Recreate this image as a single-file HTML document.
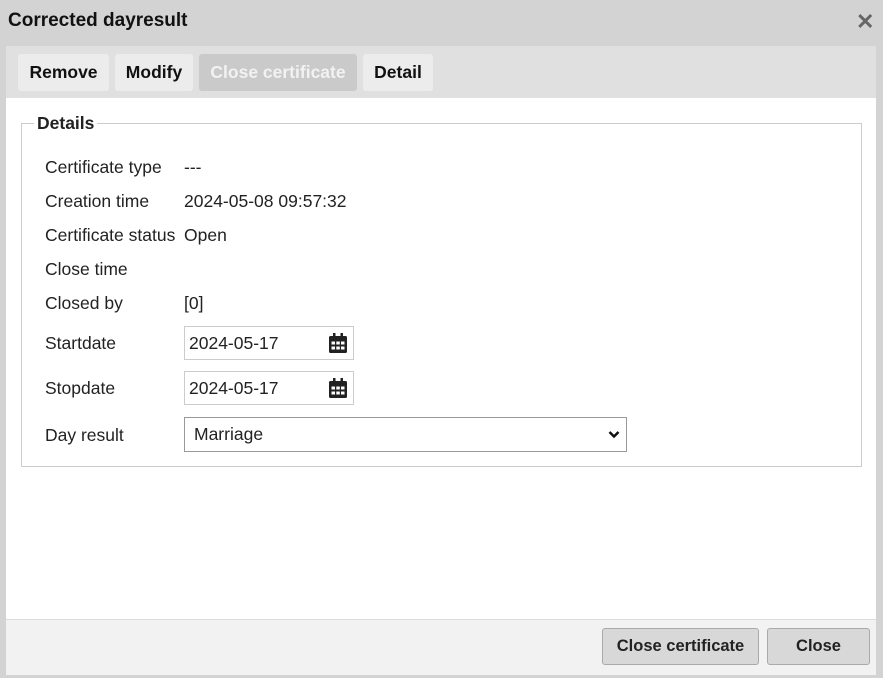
<!DOCTYPE html>
<html><head><style>
body{margin:0;width:883px;height:678px;background:#d3d3d3;font-family:"Liberation Sans",Arial,sans-serif;position:relative;overflow:hidden;color:#222}
.a{position:absolute}
.title{left:8px;top:10px;font-size:19px;font-weight:bold;color:#111}
.x{left:856px;top:9px;font-size:22px;font-weight:bold;color:#666}
.panel{left:6px;top:46px;width:870px;height:628px;background:#fff}
.tb{left:6px;top:46px;width:870px;height:52px;background:#e0e0e0}
.btn{position:absolute;top:54px;height:37px;line-height:37px;background:#ececec;border-radius:3px;font-size:17.5px;font-weight:bold;color:#111;text-align:center}
.fs{left:21px;top:123px;width:839px;height:342px;border:1px solid #ccc}
.leg{left:34px;top:113px;background:#fff;padding:0 3px;font-size:17.5px;font-weight:bold;color:#222}
.l{position:absolute;left:45px;font-size:17.5px;color:#222}
.v{position:absolute;left:184px;font-size:17.5px;color:#222}
.inp{position:absolute;left:184px;width:168px;height:32px;border:1px solid #ccc;font-size:17.5px;line-height:32px;box-sizing:content-box}
.inp span{position:absolute;left:4px}
.foot{left:6px;top:619px;width:870px;height:55px;background:#f2f2f2;border-top:1px solid #ddd}
.fb{position:absolute;top:628px;height:35px;line-height:35px;background:#d8d8d8;border:1px solid #aaa;border-radius:3px;font-size:16.5px;font-weight:bold;color:#222;text-align:center}
</style></head><body>
<div class="a title">Corrected dayresult</div>
<div class="a x">✕</div>
<div class="a panel"></div>
<div class="a tb"></div>
<div class="btn" style="left:18px;width:91px">Remove</div>
<div class="btn" style="left:115px;width:78px">Modify</div>
<div class="btn" style="left:199px;width:158px;background:#cacaca;color:#f2f2f2">Close certificate</div>
<div class="btn" style="left:363px;width:70px">Detail</div>
<div class="a fs"></div>
<div class="a leg">Details</div>
<div class="l" style="top:157px">Certificate type</div><div class="v" style="top:157px">---</div>
<div class="l" style="top:191px">Creation time</div><div class="v" style="top:191px">2024-05-08 09:57:32</div>
<div class="l" style="top:225px">Certificate status</div><div class="v" style="top:225px">Open</div>
<div class="l" style="top:259px">Close time</div>
<div class="l" style="top:293px">Closed by</div><div class="v" style="top:293px">[0]</div>
<div class="l" style="top:333px">Startdate</div>
<div class="inp" style="top:326px"><span>2024-05-17</span>
<svg style="position:absolute;left:144px;top:6px" width="18" height="20" viewBox="0 0 18 20"><rect x="4" y="0" width="2.5" height="4" fill="#222"/><rect x="11.5" y="0" width="2.5" height="4" fill="#222"/><rect x="0" y="3" width="18" height="17" rx="1.5" fill="#222"/><g fill="#fff"><rect x="2.5" y="8.5" width="3.5" height="3"/><rect x="7.3" y="8.5" width="3.5" height="3"/><rect x="12" y="8.5" width="3.5" height="3"/><rect x="2.5" y="13.5" width="3.5" height="3"/><rect x="7.3" y="13.5" width="3.5" height="3"/><rect x="12" y="13.5" width="3.5" height="3"/></g></svg></div>
<div class="l" style="top:378px">Stopdate</div>
<div class="inp" style="top:371px"><span>2024-05-17</span>
<svg style="position:absolute;left:144px;top:6px" width="18" height="20" viewBox="0 0 18 20"><rect x="4" y="0" width="2.5" height="4" fill="#222"/><rect x="11.5" y="0" width="2.5" height="4" fill="#222"/><rect x="0" y="3" width="18" height="17" rx="1.5" fill="#222"/><g fill="#fff"><rect x="2.5" y="8.5" width="3.5" height="3"/><rect x="7.3" y="8.5" width="3.5" height="3"/><rect x="12" y="8.5" width="3.5" height="3"/><rect x="2.5" y="13.5" width="3.5" height="3"/><rect x="7.3" y="13.5" width="3.5" height="3"/><rect x="12" y="13.5" width="3.5" height="3"/></g></svg></div>
<div class="l" style="top:425px">Day result</div>
<div class="a" style="left:184px;top:417px;width:441px;height:33px;border:1px solid #999;font-size:17.5px;line-height:33px"><span style="position:absolute;left:9px">Marriage</span>
<svg style="position:absolute;left:423px;top:12px" width="12" height="9" viewBox="0 0 12 9"><path d="M1.5 2 L6 6.5 L10.5 2" stroke="#111" stroke-width="2.5" fill="none"/></svg></div>
<div class="a foot"></div>
<div class="fb" style="left:602px;width:155px">Close certificate</div>
<div class="fb" style="left:767px;width:101px">Close</div>
</body></html>
